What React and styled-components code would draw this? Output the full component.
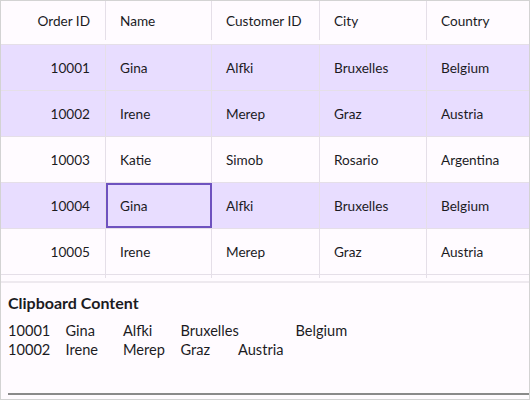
import { Fragment } from "react";
import styled, { createGlobalStyle } from "styled-components";

const GlobalStyles = createGlobalStyle`
  body {
    margin: 0;
    font-family: "Lato", "Noto Sans", sans-serif;
    background: #fffbff;
  }
`;

const columns = [
  { key: "id", title: "Order ID", align: "right" },
  { key: "name", title: "Name" },
  { key: "customer", title: "Customer ID" },
  { key: "city", title: "City" },
  { key: "country", title: "Country" },
];

const rows = [
  { id: "10001", name: "Gina", customer: "Alfki", city: "Bruxelles", country: "Belgium", selected: true },
  { id: "10002", name: "Irene", customer: "Merep", city: "Graz", country: "Austria", selected: true },
  { id: "10003", name: "Katie", customer: "Simob", city: "Rosario", country: "Argentina" },
  { id: "10004", name: "Gina", customer: "Alfki", city: "Bruxelles", country: "Belgium", selected: true, current: "name" },
  { id: "10005", name: "Irene", customer: "Merep", city: "Graz", country: "Austria" },
];

// copied rows, laid out on tab stops as the grid puts them on the clipboard
const clipboard = rows
  .filter((r) => r.selected)
  .slice(0, 2)
  .map((r) => columns.map((c) => r[c.key]));

export default function App() {
  return (
    <>
      <GlobalStyles />
      <Frame>
        <GridArea>
          <Row $header>
            {columns.map((c) => (
              <Cell key={c.key} $align={c.align}>
                {c.title}
              </Cell>
            ))}
          </Row>
          {rows.map((r) => (
            <Row key={r.id} $selected={r.selected}>
              {columns.map((c) => (
                <Cell key={c.key} $align={c.align} $current={r.current === c.key}>
                  {r[c.key]}
                </Cell>
              ))}
            </Row>
          ))}
          {/* next row, scrolled out of view except its top edge */}
          <Row $stub>
            {columns.map((c) => (
              <Cell key={c.key} />
            ))}
          </Row>
        </GridArea>
        <Panel>
          <PanelTitle>Clipboard Content</PanelTitle>
          <ClipText>
            {clipboard.map((fields, i) => (
              <ClipLine key={i}>
                {fields.map((f, j) => (
                  <Fragment key={j}>
                    {j > 0 && "\t"}
                    <span>{f}</span>
                  </Fragment>
                ))}
              </ClipLine>
            ))}
          </ClipText>
          <Underline />
        </Panel>
      </Frame>
    </>
  );
}

const Frame = styled.div`
  box-sizing: border-box;
  width: 530px;
  height: 400px;
  border: 1px solid #d3d3d3;
  display: flex;
  flex-direction: column;
  background: #fffbff;
  color: #1c1b1f;
`;

const GridArea = styled.div`
  height: 280px;
  overflow: hidden;
  border-bottom: 2px solid #eee9ef;
  flex-shrink: 0;
`;

const Row = styled.div`
  display: grid;
  grid-template-columns: 105px 106px 108px 107px 1fr;
  box-sizing: border-box;
  height: ${(p) => (p.$header ? "44px" : p.$stub ? "3px" : "46px")};
  padding-bottom: ${(p) => (p.$header ? "4px" : "0")};
  border-bottom: ${(p) => (p.$stub ? "none" : "1px solid #e5dfe8")};
  background: ${(p) => (p.$selected ? "#e8ddff" : "transparent")};
  font-size: 13.6px;
`;

const Cell = styled.div`
  box-sizing: border-box;
  display: flex;
  align-items: center;
  white-space: nowrap;
  justify-content: ${(p) => (p.$align === "right" ? "flex-end" : "flex-start")};
  padding: 0 15px 0 14px;
  border-right: 1px solid #e5dfe8;
  outline: ${(p) => (p.$current ? "2px solid #6e52bf" : "none")};
  outline-offset: -2px;

  &:last-child {
    border-right: none;
  }
`;

const Panel = styled.div`
  flex: 1;
  display: flex;
  flex-direction: column;
  padding: 10px 0 4px 7px;
`;

const PanelTitle = styled.div`
  font-size: 16px;
  font-weight: 700;
  margin-bottom: 10px;
`;

const ClipText = styled.div`
  flex: 1;
  font-size: 14.6px;
  line-height: 18.5px;
`;

const ClipLine = styled.div`
  white-space: pre;
  tab-size: 57.5px;
`;

const Underline = styled.div`
  height: 2px;
  background: #8a8a8a;
`;
